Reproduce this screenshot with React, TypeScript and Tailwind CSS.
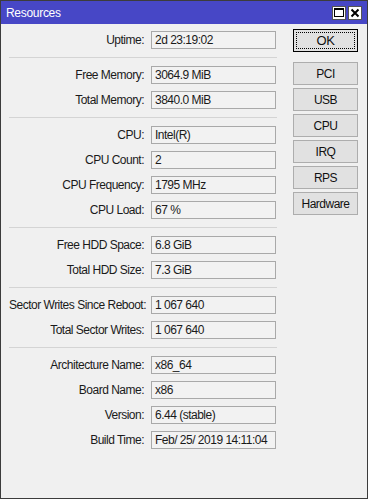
import React from 'react';

type Row = { label: string; value: string };

const sections: Row[][] = [
  [{ label: 'Uptime:', value: '2d 23:19:02' }],
  [
    { label: 'Free Memory:', value: '3064.9 MiB' },
    { label: 'Total Memory:', value: '3840.0 MiB' },
  ],
  [
    { label: 'CPU:', value: 'Intel(R)' },
    { label: 'CPU Count:', value: '2' },
    { label: 'CPU Frequency:', value: '1795 MHz' },
    { label: 'CPU Load:', value: '67 %' },
  ],
  [
    { label: 'Free HDD Space:', value: '6.8 GiB' },
    { label: 'Total HDD Size:', value: '7.3 GiB' },
  ],
  [
    { label: 'Sector Writes Since Reboot:', value: '1 067 640' },
    { label: 'Total Sector Writes:', value: '1 067 640' },
  ],
  [
    { label: 'Architecture Name:', value: 'x86_64' },
    { label: 'Board Name:', value: 'x86' },
    { label: 'Version:', value: '6.44 (stable)' },
    { label: 'Build Time:', value: 'Feb/ 25/ 2019 14:11:04' },
  ],
];

const buttons = ['PCI', 'USB', 'CPU', 'IRQ', 'RPS', 'Hardware'];

const Field: React.FC<Row> = ({ label, value }) => (
  <div className="flex items-center h-[25px]">
    <div className="w-[136px] text-right pr-[1px] whitespace-nowrap text-[#1a1a1a]">{label}</div>
    <div className="ml-[6px] w-[125px] h-[18px] border border-[#a9a9a9] bg-[#f2f2f2] flex items-center pl-[3px] text-[#1a1a1a] whitespace-nowrap">
      {value}
    </div>
  </div>
);

const App: React.FC = () => {
  return (
    <div
      className="w-[368px] h-[499px] border border-[#3c3c3c] bg-[#f0f0f0] flex flex-col text-[12px] tracking-[-0.5px] leading-none"
      style={{ fontFamily: '"Liberation Sans", Arial, sans-serif' }}
    >
      <div className="h-[23px] bg-[#4747c6] flex items-center justify-between pl-[5px] pr-[5px] shrink-0">
        <span className="text-white text-[12px] tracking-[-0.3px]">Resources</span>
        <div className="flex gap-[2px]">
          <div className="w-[14px] h-[14px] bg-white border border-[#555] flex items-center justify-center">
            <div className="w-[10px] h-[9px] border border-black border-t-2" />
          </div>
          <div className="w-[14px] h-[14px] bg-white border border-[#555] flex items-center justify-center">
            <svg width="10" height="10" viewBox="0 0 10 10">
              <path d="M1.5 1.5 L8.5 8.5 M8.5 1.5 L1.5 8.5" stroke="#000" strokeWidth="2" />
            </svg>
          </div>
        </div>
      </div>
      <div className="flex flex-1">
        <div className="w-[283px] pl-[8px] pt-[3px]">
          {sections.map((rows, i) => (
            <div key={i}>
              {i > 0 && (
                <div className="h-[10px] flex items-center w-[268px]">
                  <div className="h-px w-full bg-[#d4d4d4]" />
                </div>
              )}
              {rows.map((r) => (
                <Field key={r.label} {...r} />
              ))}
            </div>
          ))}
        </div>
        <div className="pl-[9px] pt-[5px] flex flex-col">
          <button className="w-[65px] h-[23px] border border-black bg-[#e1e1e1] p-[2px]">
            <div className="w-full h-full border border-dotted border-black flex items-center justify-center text-[#111] text-[13px]">
              OK
            </div>
          </button>
          <div className="mt-[10px] flex flex-col gap-[3px]">
            {buttons.map((b) => (
              <button
                key={b}
                className="w-[65px] h-[23px] border border-[#adadad] bg-[#e1e1e1] flex items-center justify-center text-[#111] text-[12px]"
              >
                {b}
              </button>
            ))}
          </div>
        </div>
      </div>
    </div>
  );
};

export default App;
